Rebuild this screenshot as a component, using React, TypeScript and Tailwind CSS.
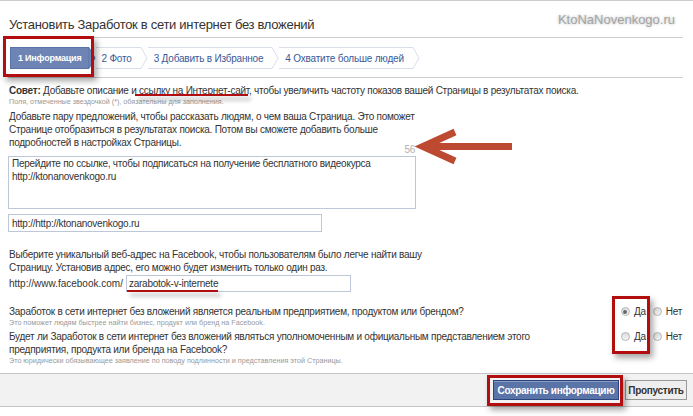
import React from 'react';

// ── Tabs ──────────────────────────────────────────────────────────────────────

const TABS = ['1 Информация', '2 Фото', '3 Добавить в Избранное', '4 Охватите больше людей'];

function Tab({ label, active }: { label: string; active: boolean }) {
  if (active) {
    return (
      <div className="flex h-[22px] items-stretch">
        <div className="flex items-center border-y border-l border-[#5973a9] bg-[#6d84b4] pl-[7px] pr-[6px] text-[9px] font-bold tracking-[-0.2px] text-white">
          {label}
        </div>
        <svg width="8" height="22" viewBox="0 0 8 22" className="block">
          <path d="M0 0.5 L1 0.5 L7 11 L1 21.5 L0 21.5 Z" fill="#6d84b4" stroke="#5973a9" strokeWidth="1" />
        </svg>
      </div>
    );
  }
  return (
    <div className="flex h-[22px] items-stretch">
      <div className="flex items-center border-y border-[#d8dfea] pl-[6px] pr-[8px] text-[10px] tracking-[-0.2px] text-[#3b5998]">
        {label}
      </div>
      <svg width="8" height="22" viewBox="0 0 8 22" className="block">
        <path d="M0 0.5 L1 0.5 L7 11 L1 21.5 L0 21.5" fill="none" stroke="#d8dfea" strokeWidth="1" />
      </svg>
    </div>
  );
}

// ── Radio ─────────────────────────────────────────────────────────────────────

function Radio({ checked, label }: { checked?: boolean; label: string }) {
  return (
    <span className="flex items-center gap-[4px]">
      <span className="flex h-[9px] w-[9px] items-center justify-center rounded-full border border-[#b5b5b5] bg-gradient-to-b from-[#dcdcdc] to-[#f7f7f7]">
        {checked && <span className="h-[4px] w-[4px] rounded-full bg-[#666]" />}
      </span>
      <span className="text-[10px] text-[#333]">{label}</span>
    </span>
  );
}

// ── Page ──────────────────────────────────────────────────────────────────────

export default function App() {
  return (
    <div
      className="relative h-[416px] w-[693px] overflow-hidden bg-white text-[10px] leading-[13px] tracking-[-0.25px] text-[#333]"
      style={{ fontFamily: '"Liberation Sans", Arial, sans-serif' }}
    >
      <div className="border-t border-[#ccc]" />

      {/* Header */}
      <div className="flex h-[36px] justify-between pl-[9px] pr-[18px]">
        <h1 className="pt-[16px] text-[13px] leading-[15px] tracking-[-0.3px] text-[#333]">
          Установить Заработок в сети интернет без вложений
        </h1>
        <span className="pt-[11px] text-[13px] leading-[15px] tracking-normal text-[#a5a5a5] [text-shadow:0_0_3px_rgba(0,0,0,0.3)]">
          KtoNaNovenkogo.ru
        </span>
      </div>

      <div className="ml-[8px] mr-[10px] border-t border-[#ccc]" />

      {/* Tabs */}
      <div className="flex h-[39px] items-center pl-[10px] pt-[1px]">
        {TABS.map((t, i) => (
          <Tab key={t} label={t} active={i === 0} />
        ))}
      </div>

      <div className="ml-[8px] mr-[10px] border-t border-[#ccc]" />

      {/* Form */}
      <div className="px-[8px] pt-[6px]">
        <p className="whitespace-nowrap pl-[1px]">
          <span className="font-bold">Совет:</span> Добавьте описание и ссылку на Интернет-сайт, чтобы увеличить частоту показов вашей Страницы в результатах поиска.
        </p>
        <p className="pl-[1px] text-[7.2px] leading-[10px] tracking-normal text-[#999]">
          Поля, отмеченные звездочкой (*), обязательны для заполнения.
        </p>

        <p className="mt-[3px] whitespace-nowrap pl-[1px]">
          Добавьте пару предложений, чтобы рассказать людям, о чем ваша Страница. Это поможет
          <br />
          Странице отобразиться в результатах поиска. Потом вы сможете добавить больше
          <br />
          подробностей в настройках Страницы.
        </p>

        <div className="-mt-[5px] w-[407px] text-right leading-[11px] text-[#b0b0b0]">56</div>

        <div className="mt-[1px] h-[53px] w-[408px] whitespace-nowrap border border-[#bdc7d8] pl-[3px]">
          Перейдите по ссылке, чтобы подписаться на получение бесплатного видеокурса
          <br />
          http://ktonanovenkogo.ru
        </div>

        <div className="mt-[5px] flex h-[18px] w-[314px] items-center border border-[#bdc7d8] pl-[3px]">
          http://http://ktonanovenkogo.ru
        </div>

        <p className="mt-[16px] whitespace-nowrap pl-[1px]">
          Выберите уникальный веб-адрес на Facebook, чтобы пользователям было легче найти вашу
          <br />
          Страницу. Установив адрес, его можно будет изменить только один раз.
        </p>

        <div className="mt-[1px] flex items-center gap-[3px] pl-[1px]">
          <span className="tracking-normal">http://www.facebook.com/</span>
          <span className="flex h-[17px] w-[225px] items-center border border-[#bdc7d8] pl-[2px]">zarabotok-v-internete</span>
        </div>

        {/* Questions */}
        <div className="mt-[13px] flex justify-between pl-[1px] pr-[3px]">
          <div>
            <p className="whitespace-nowrap">Заработок в сети интернет без вложений является реальным предприятием, продуктом или брендом?</p>
            <p className="text-[7.2px] leading-[9px] tracking-normal text-[#999]">
              Это поможет людям быстрее найти бизнес, продукт или бренд на Facebook.
            </p>
          </div>
          <div className="flex h-[13px] items-center gap-[7px]">
            <Radio checked label="Да" />
            <Radio label="Нет" />
          </div>
        </div>

        <div className="mt-[3px] flex justify-between pl-[1px] pr-[3px]">
          <div>
            <p className="whitespace-nowrap">
              Будет ли Заработок в сети интернет без вложений являться уполномоченным и официальным представлением этого
              <br />
              предприятия, продукта или бренда на Facebook?
            </p>
            <p className="text-[7.2px] leading-[9px] tracking-normal text-[#999]">
              Это юридически обязывающее заявление по поводу подлинности и представления этой Страницы.
            </p>
          </div>
          <div className="flex h-[13px] items-center gap-[7px]">
            <Radio label="Да" />
            <Radio label="Нет" />
          </div>
        </div>
      </div>

      {/* Footer */}
      <div className="mt-[8px] flex h-[34px] items-center justify-end gap-[6px] border-y border-[#c4c4c4] bg-[#f2f2f2] pr-[6px]">
        <button className="h-[20px] w-[126px] border border-[#29447e] bg-[#5b74a8] text-[10px] font-bold tracking-[-0.3px] text-white shadow-[inset_0_1px_0_#8a9cc2]">
          Сохранить информацию
        </button>
        <button className="h-[20px] w-[62px] border border-[#999] bg-[#eee] text-[10px] font-bold tracking-[-0.3px] text-[#333]">
          Пропустить
        </button>
      </div>

      {/* Annotations */}
      <div className="pointer-events-none absolute left-[3px] top-[36px] h-[41px] w-[91px] border-[3px] border-[#b20e10] shadow-[3px_4px_6px_rgba(0,0,0,0.35)]" />
      <div className="pointer-events-none absolute left-[135px] top-[94px] h-[2px] w-[113px] bg-[#b20e10] shadow-[3px_4px_4px_rgba(0,0,0,0.35)]" />
      <div className="pointer-events-none absolute left-[127px] top-[290px] h-[2px] w-[91px] bg-[#b20e10] shadow-[3px_4px_4px_rgba(0,0,0,0.35)]" />
      <div className="pointer-events-none absolute left-[612px] top-[296px] h-[58px] w-[38px] border-[3px] border-[#b20e10] shadow-[3px_4px_6px_rgba(0,0,0,0.35)]" />
      <div className="pointer-events-none absolute left-[487px] top-[375px] h-[31px] w-[136px] border-[3px] border-[#b20e10] shadow-[3px_4px_6px_rgba(0,0,0,0.35)]" />
      <svg className="pointer-events-none absolute left-[415px] top-[125px]" width="100" height="44" viewBox="0 0 100 44">
        <path d="M97 21.5 L9 21.5 M40 7 L8 21.5 L40 36" fill="none" stroke="#bd4a30" strokeWidth="7" strokeLinejoin="miter" />
      </svg>
    </div>
  );
}
